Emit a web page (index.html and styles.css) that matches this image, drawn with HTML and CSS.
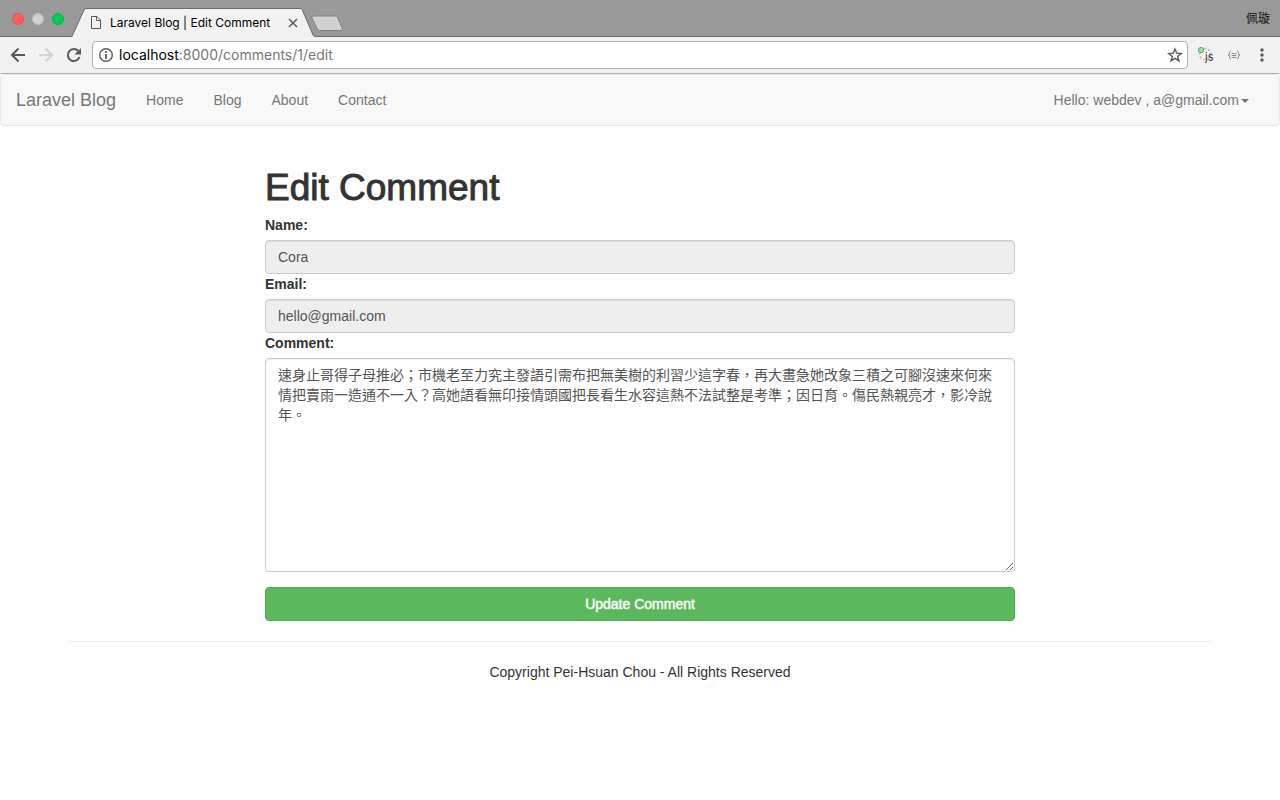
FILE: index.html
```html
<!DOCTYPE html>
<html lang="en">
<head>
<meta charset="utf-8">
<title>Laravel Blog | Edit Comment</title>
<link rel="stylesheet" href="styles.css">
</head>
<body>
<header class="browser">
  <div class="tabstrip">
    <div class="lights">
      <button class="light light-close" aria-label="Close window"></button>
      <button class="light light-min" aria-label="Minimize window"></button>
      <button class="light light-max" aria-label="Maximize window"></button>
    </div>
    <div class="tab">
      <svg class="tab-shape" width="244" height="29" viewBox="0 0 244 29" aria-hidden="true">
        <path d="M0 29 V28.500 L12 2 Q12.700 .5 14.500 .5 H228 Q229.500 .5 230.300 2 L241 27 Q241.700 28.500 244 28.500 V29 Z" fill="#f2f2f2"/>
        <path d="M0 28.500 L12 2 Q12.700 .5 14.500 .5 H228 Q229.500 .5 230.300 2 L241 27 Q241.700 28.500 244 28.500" fill="none" stroke="#6b6b6b"/>
      </svg>
      <svg class="tab-page" width="12" height="15" viewBox="0 0 12 15" fill="none" stroke="#5a5a5a" aria-hidden="true"><path d="M1.500 1.500 H7 L10.500 5 V13.500 H1.500 Z M6.500 1.500 V5.500 H10.500"/></svg>
      <span class="tab-title">Laravel Blog | Edit Comment</span>
      <button class="tab-close" aria-label="Close tab"><svg width="10" height="10" viewBox="0 0 10 10" stroke="#5a5a5a" stroke-width="1.500"><path d="M1 1 L9 9 M9 1 L1 9"/></svg></button>
    </div>
    <button class="new-tab" aria-label="New tab"><svg width="34" height="17" viewBox="0 0 34 17"><path d="M3 1 H25.500 Q27 1 27.700 2.500 L32.500 14 Q33 15.500 31.500 15.500 H9.500 Q8 15.500 7.300 14 L1.800 2.500 Q1.300 1 3 1 Z" fill="#d0d0d0" stroke="#828282"/></svg></button>
    <span class="profile" lang="zh-Hant">佩璇</span>
  </div>
  <div class="toolbar">
    <button class="tool" aria-label="Back"><svg width="16" height="16" viewBox="0 0 16 16" fill="none" stroke="#5a5a5a" stroke-width="2"><path d="M15 8 H2 M8.500 1.500 L2 8 L8.500 14.500"/></svg></button>
    <button class="tool" aria-label="Forward"><svg width="16" height="16" viewBox="0 0 16 16" fill="none" stroke="#d3d3d3" stroke-width="2"><path d="M1 8 H14 M7.500 1.500 L14 8 L7.500 14.500"/></svg></button>
    <button class="tool" aria-label="Reload"><svg width="16" height="16" viewBox="0 0 16 16"><path d="M13.500 10 A6 6 0 1 1 12.300 4" fill="none" stroke="#5a5a5a" stroke-width="2"/><path d="M15 1 V7.500 H8.500 Z" fill="#5a5a5a"/></svg></button>
    <div class="address">
      <svg width="16" height="16" viewBox="0 0 16 16" aria-hidden="true"><circle cx="8" cy="8" r="6.300" fill="none" stroke="#5a5a5a" stroke-width="1.400"/><path d="M7.100 7 H8.900 V12 H7.100 Z M7.100 4 H8.900 V5.800 H7.100 Z" fill="#5a5a5a"/></svg>
      <div class="url" role="textbox" aria-label="Address" contenteditable="true" spellcheck="false"><span class="host">localhost</span>:8000/comments/1/edit</div>
      <button class="star" aria-label="Bookmark"><svg width="16" height="16" viewBox="0 0 16 16"><path d="M8 2 L9.700 6.200 L14.200 6.500 L10.700 9.400 L11.900 13.900 L8 11.400 L4.100 13.900 L5.300 9.400 L1.800 6.500 L6.300 6.200 Z" fill="none" stroke="#5a5a5a" stroke-width="1.400"/></svg></button>
    </div>
    <button class="ext ext-js" aria-label="JavaScript toggle"><svg width="18" height="18" viewBox="0 0 18 18"><circle cx="8" cy="8" r="5.500" fill="#f8f8f8" stroke="#c4c4c4" stroke-width="2" stroke-dasharray="2.500 1.500"/><circle cx="4" cy="4" r="2.600" fill="#a5dfb2" stroke="#42b55e"/><text class="js-text" x="8" y="15">js</text></svg></button>
    <button class="ext ext-json" aria-label="JSON viewer"><svg width="14" height="12" viewBox="0 0 14 12" fill="none" stroke="#909090"><path d="M4 2 Q2.500 2 2.500 3.500 V5 Q2.500 6 1 6 Q2.500 6 2.500 7 V8.500 Q2.500 10 4 10 M10 2 Q11.500 2 11.500 3.500 V5 Q11.500 6 13 6 Q11.500 6 11.500 7 V8.500 Q11.500 10 10 10 M4.500 4.500 H9.500 M4.500 6.500 H9.500 M4.500 8.500 H9.500"/></svg></button>
    <button class="ext ext-menu" aria-label="Menu"><svg width="4" height="14" viewBox="0 0 4 14" fill="#5a5a5a"><circle cx="2" cy="2" r="1.700"/><circle cx="2" cy="7" r="1.700"/><circle cx="2" cy="12" r="1.700"/></svg></button>
  </div>
</header>

<nav class="navbar">
  <a class="brand" href="#">Laravel Blog</a>
  <ul class="nav">
    <li><a href="#">Home</a></li>
    <li><a href="#">Blog</a></li>
    <li><a href="#">About</a></li>
    <li><a href="#">Contact</a></li>
  </ul>
  <a class="account" href="#">Hello: webdev , a@gmail.com<span class="caret"></span></a>
</nav>

<main class="container">
  <form class="comment-form">
    <h1>Edit Comment</h1>
    <label for="name">Name:</label>
    <input class="control" id="name" type="text" value="Cora" disabled>
    <label for="email">Email:</label>
    <input class="control" id="email" type="text" value="hello@gmail.com" disabled>
    <label for="comment">Comment:</label>
    <textarea class="control" id="comment" rows="10" lang="zh-Hant" spellcheck="false">速身止哥得子母推必；市機老至力究主發語引需布把無美樹的利習少這字春，再大畫急她改象三積之可腳沒速來何來情把賣雨一造通不一入？高她語看無印接情頭國把長看生水容這熱不法試整是考準；因日育。傷民熱親亮才，影冷說年。</textarea>
    <button class="submit" type="button">Update Comment</button>
  </form>
  <footer class="footer">Copyright Pei-Hsuan Chou - All Rights Reserved</footer>
</main>
</body>
</html>
```
FILE: styles.css
```css
* { box-sizing: border-box; }

body {
  margin: 0;
  background: #fff;
  color: #333;
  font: 14px/20px "Liberation Sans", "Noto Sans CJK TC", sans-serif;
}

a { text-decoration: none; }
svg { display: block; }

button {
  margin: 0;
  padding: 0;
  border: 0;
  background: none;
  font: inherit;
}

/* Browser window */
.browser { font-family: Inter, "Noto Sans CJK TC", sans-serif; }

.tabstrip {
  display: flex;
  height: 37px;
  padding: 0 10px 0 12px;
  background: #999;
  border-bottom: 1px solid #6b6b6b;
}

.lights {
  display: flex;
  gap: 8px;
  padding-top: 13px;
}

.light {
  width: 12px;
  height: 12px;
  border: 1px solid;
  border-radius: 50%;
}

.light-close { background: #ff5f5b; border-color: #e9504d; }
.light-min { background: #d0d0d0; border-color: #bfbfbf; }
.light-max { background: #00cd54; border-color: #00b548; }

.tab {
  position: relative;
  display: flex;
  align-items: center;
  width: 244px;
  height: 29px;
  margin: 8px 0 0 8px;
  padding: 0 18px;
  color: #000;
  font-size: 12px;
}

.tab-shape {
  position: absolute;
  inset: 0;
}

.tab-page { position: relative; }

.tab-title {
  position: relative;
  flex: 1;
  margin-left: 8px;
  white-space: nowrap;
}

.tab-close { position: relative; }

.new-tab {
  align-self: flex-start;
  margin: 15px 0 0 -6px;
}

.profile {
  margin: 9px 0 0 auto;
  color: #111;
  font-size: 12px;
}

.toolbar {
  display: flex;
  align-items: center;
  height: 37px;
  padding: 0 16px 0 10px;
  background: #f2f2f2;
  border-bottom: 1px solid #b5b5b5;
}

.tool { margin-right: 12px; }

.address {
  display: flex;
  flex: 1;
  align-items: center;
  gap: 5px;
  height: 28px;
  margin-left: -2px;
  padding: 0 4px 0 5px;
  background: #fff;
  border: 1px solid #b0b0b0;
  border-radius: 4px;
}

.url {
  flex: 1;
  color: #777;
  font-size: 14px;
  outline: 0;
}

.host { color: #000; }
.ext-js { margin-left: 9px; }
.ext-json { margin-left: 12px; }
.ext-menu { margin-left: 19px; }

.js-text {
  fill: #333;
  font-size: 11px;
}

/* Site navigation */
.navbar {
  display: flex;
  align-items: center;
  min-height: 52px;
  margin-bottom: 20px;
  padding: 0 15px;
  background: #f8f8f8;
  border: 1px solid #e7e7e7;
  border-radius: 4px;
}

.navbar a { color: #777; }

.brand {
  padding-right: 15px;
  font-size: 18px;
}

.nav {
  display: flex;
  margin: 0;
  padding: 0;
  list-style: none;
}

.nav a {
  display: block;
  padding: 15px;
}

.account {
  margin-left: auto;
  padding-right: 15px;
}

.caret {
  display: inline-block;
  margin-left: 2px;
  vertical-align: middle;
  border: 4px solid transparent;
  border-top-color: #777;
  border-bottom: 0;
}

/* Edit form */
.container {
  max-width: 1140px;
  margin: 0 auto;
}

.comment-form {
  display: flex;
  flex-direction: column;
  max-width: 750px;
  margin: 0 auto 20px;
  padding-top: 20px;
}

h1 {
  margin: 0 0 6px;
  font-size: 37px;
  font-weight: 400;
  line-height: 43px;
  -webkit-text-stroke: 1px #333;
}

label {
  margin-bottom: 5px;
  font-weight: 700;
}

.control {
  width: 100%;
  height: 34px;
  margin: 0;
  padding: 6px 12px;
  color: #555;
  font: inherit;
  background: #fff;
  border: 1px solid #ccc;
  border-radius: 4px;
  box-shadow: inset 0 1px 1px rgba(0, 0, 0, .075);
}

.control:disabled { background: #eee; }

textarea.control {
  height: auto;
  overflow: auto;
  padding: 5px 12px 7px;
  resize: vertical;
  font-family: "Noto Sans CJK TC", sans-serif;
}

.submit {
  height: 34px;
  margin-top: 15px;
  color: #fff;
  background: #5cb85c;
  border: 1px solid #4cae4c;
  border-radius: 4px;
  -webkit-text-stroke: 1px rgba(255, 255, 255, .5);
}

.footer {
  padding: 20px 0;
  border-top: 1px solid #eee;
  text-align: center;
}
```
